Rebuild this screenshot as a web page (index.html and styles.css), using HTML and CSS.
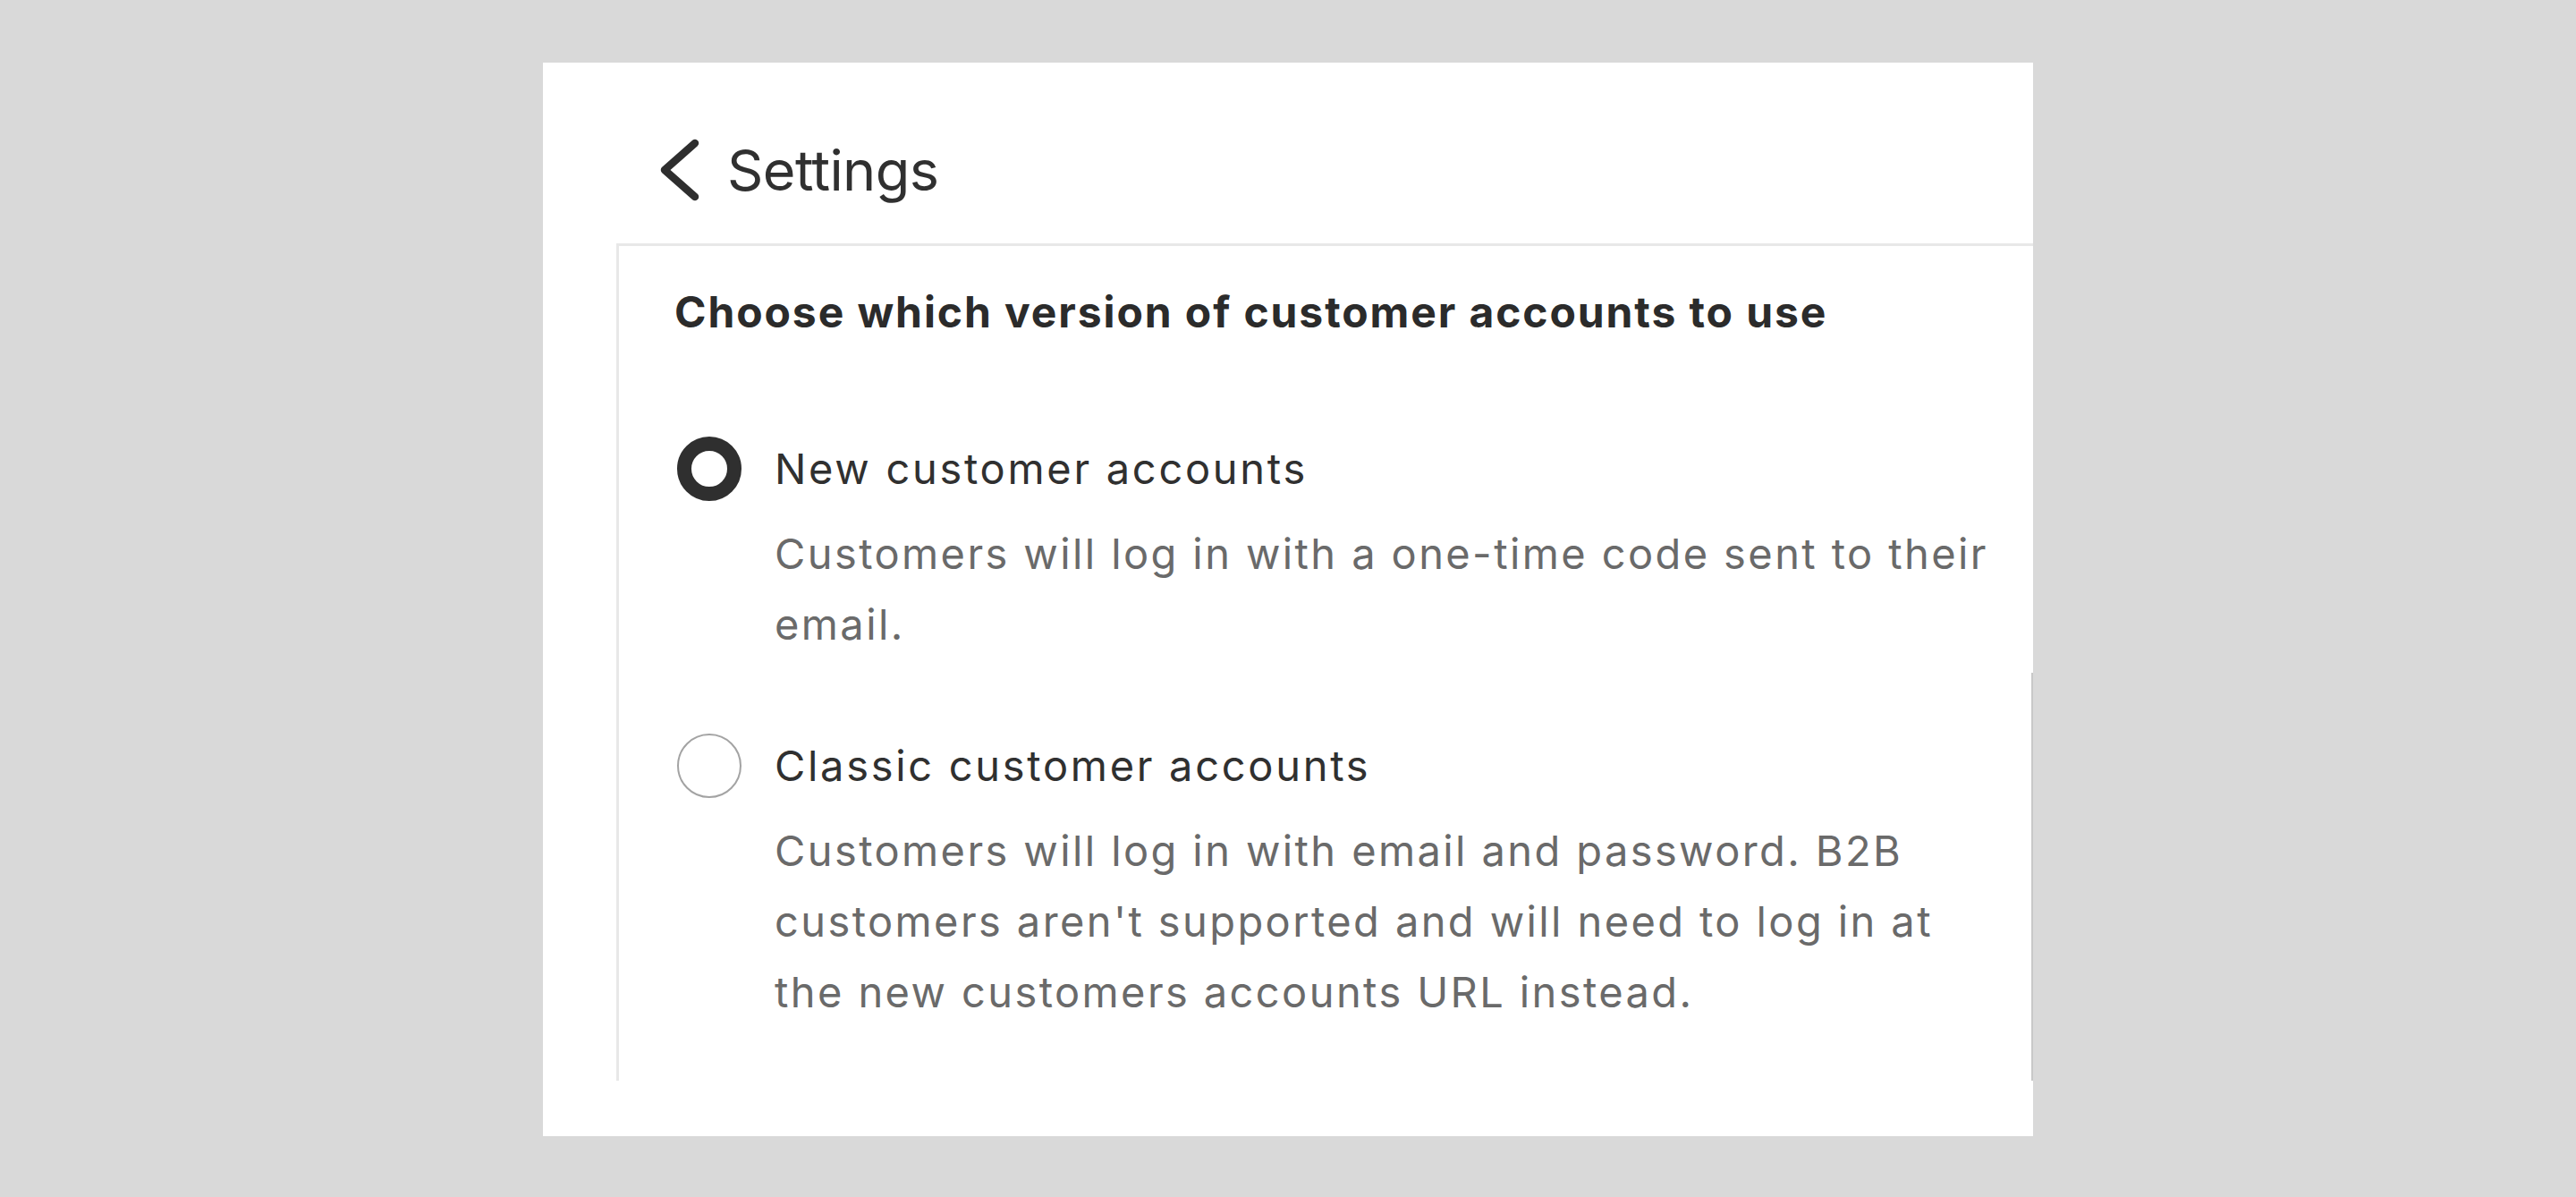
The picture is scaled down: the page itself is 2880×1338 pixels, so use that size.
FILE: index.html
```html
<!DOCTYPE html>
<html lang="en">
<head>
<meta charset="utf-8">
<title>Settings</title>
<link rel="stylesheet" href="styles.css">
</head>
<body>
<main class="panel">
  <header class="topbar">
    <svg class="back" width="44" height="70" viewBox="0 0 44 70" aria-hidden="true">
      <polyline points="39,5 5,35 39,65" fill="none" stroke="#2e2e2e" stroke-width="8.5" stroke-linecap="round" stroke-linejoin="round"/>
    </svg>
    <span class="title">Settings</span>
  </header>
  <section class="card">
    <h1 class="heading">Choose which version of customer accounts to use</h1>
    <div class="option">
      <span class="radio radio-on"></span>
      <div class="opt-title">New customer accounts</div>
      <p class="opt-desc">Customers will log in with a one-time code sent to their email.</p>
    </div>
    <div class="option">
      <span class="radio"></span>
      <div class="opt-title">Classic customer accounts</div>
      <p class="opt-desc">Customers will log in with email and password. B2B customers aren't supported and will need to log in at the new customers accounts URL instead.</p>
    </div>
  </section>
</main>
</body>
</html>
```

FILE: styles.css
```css
html, body {
  margin: 0;
  padding: 0;
}
body {
  width: 2880px;
  height: 1338px;
  background: #d9d9d9;
  font-family: "Inter", "Noto Sans", "Liberation Sans", sans-serif;
  padding-top: 70px;
  box-sizing: border-box;
}
.panel {
  width: 1666px;
  height: 1200px;
  margin: 0 auto;
  background: #ffffff;
  overflow: hidden;
  display: flex;
  flex-direction: column;
  box-sizing: border-box;
}
.topbar {
  display: flex;
  align-items: center;
  padding: 80px 0 0 131px;
  height: 80px;
  margin-bottom: 42px;
  box-sizing: content-box;
  gap: 31px;
}
.back {
  display: block;
  flex: none;
}
.title {
  font-size: 63px;
  line-height: 80px;
  color: #303030;
  font-weight: 400;
  letter-spacing: -0.6px;
}
.card {
  margin-left: 82px;
  border-top: 3px solid #e8e8e8;
  border-left: 3px solid #e8e8e8;
  padding: 44px 40px 60px 62px;
  position: relative;
}
.card::after {
  content: "";
  position: absolute;
  right: 0;
  top: 477px;
  bottom: 0;
  width: 2px;
  background: #c8c8c8;
}
.heading {
  margin: 0;
  font-size: 48px;
  line-height: 60px;
  font-weight: 700;
  color: #2b2b2b;
  letter-spacing: 1.9px;
}
.option {
  display: grid;
  grid-template-columns: 72px 1fr;
  column-gap: 37px;
  margin-top: 105px;
  padding-left: 3px;
}
.option + .option {
  margin-top: 79px;
}
.radio {
  grid-column: 1;
  grid-row: 1;
  align-self: center;
  width: 72px;
  height: 72px;
  border-radius: 50%;
  box-sizing: border-box;
  border: 2px solid #a3a3a3;
}
.radio-on {
  border: 16px solid #2f2f2f;
}
.opt-title {
  grid-column: 2;
  grid-row: 1;
  font-size: 47px;
  line-height: 79px;
  color: #303030;
  letter-spacing: 2.7px;
}
.opt-desc {
  grid-column: 2;
  grid-row: 2;
  margin: 16px 0 0;
  font-size: 47px;
  line-height: 79px;
  color: #6a6a6a;
  letter-spacing: 2.4px;
}
```
